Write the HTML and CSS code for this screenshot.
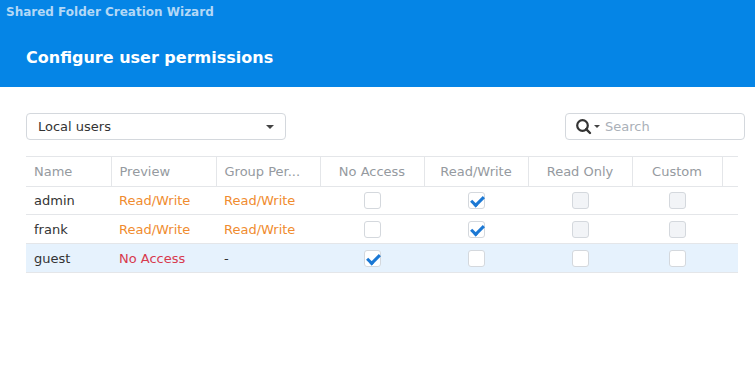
FILE: index.html
```html
<!DOCTYPE html>
<html lang="en">

<head>
    <meta charset="UTF-8" />
    <title>Shared Folder Creation Wizard</title>
    <link rel="stylesheet" href="styles.css">
</head>

<body>
    <div class="wizard">
        <header class="wizard-head">
            <div class="window-title">Shared Folder Creation Wizard</div>
            <h1>Configure user permissions</h1>
        </header>

        <div class="wizard-body">
            <div class="toolbar">
                <div class="select">
                    <span>Local users</span>
                    <span class="caret"></span>
                </div>
                <div class="search">
                    <svg class="search-icon" width="17" height="17" viewBox="0 0 17 17">
                        <circle cx="7.5" cy="7.5" r="5.3" fill="none" stroke="#333" stroke-width="2.2" />
                        <path d="M11.2 11.2 L15 15" stroke="#333" stroke-width="2.4" stroke-linecap="round" />
                    </svg>
                    <span class="caret small"></span>
                    <span class="placeholder">Search</span>
                </div>
            </div>

            <table class="perm-table">
                <colgroup>
                    <col style="width:85px">
                    <col style="width:105px">
                    <col style="width:104px">
                    <col style="width:104px">
                    <col style="width:104px">
                    <col style="width:104px">
                    <col style="width:90px">
                    <col style="width:16px">
                </colgroup>
                <thead>
                    <tr>
                        <th>Name</th>
                        <th>Preview</th>
                        <th>Group Per...</th>
                        <th class="center">No Access</th>
                        <th class="center">Read/Write</th>
                        <th class="center">Read Only</th>
                        <th class="center">Custom</th>
                        <th class="last"></th>
                    </tr>
                </thead>
                <tbody>
                    <tr>
                        <td>admin</td>
                        <td class="rw">Read/Write</td>
                        <td class="rw">Read/Write</td>
                        <td class="center"><span class="box"></span></td>
                        <td class="center"><span class="box checked"></span></td>
                        <td class="center"><span class="box disabled"></span></td>
                        <td class="center"><span class="box disabled"></span></td>
                        <td></td>
                    </tr>
                    <tr>
                        <td>frank</td>
                        <td class="rw">Read/Write</td>
                        <td class="rw">Read/Write</td>
                        <td class="center"><span class="box"></span></td>
                        <td class="center"><span class="box checked"></span></td>
                        <td class="center"><span class="box disabled"></span></td>
                        <td class="center"><span class="box disabled"></span></td>
                        <td></td>
                    </tr>
                    <tr class="selected">
                        <td>guest</td>
                        <td class="na">No Access</td>
                        <td>-</td>
                        <td class="center"><span class="box checked"></span></td>
                        <td class="center"><span class="box"></span></td>
                        <td class="center"><span class="box"></span></td>
                        <td class="center"><span class="box"></span></td>
                        <td></td>
                    </tr>
                </tbody>
            </table>
        </div>
    </div>
</body>

</html>
```

FILE: styles.css
```css
* {
    box-sizing: border-box;
}

body {
    margin: 0;
    font-family: 'DejaVu Sans', Verdana, sans-serif;
    background-color: #fff;
    color: #333;
}

.wizard-head {
    background-color: #0585e6;
    height: 87px;
    padding: 5px 0 0 6px;
}

.window-title {
    font-size: 12px;
    font-weight: bold;
    color: #b3d8f6;
}

.wizard-head h1 {
    margin: 29px 0 0 20px;
    font-size: 16px;
    font-weight: bold;
    color: #fff;
}

.wizard-body {
    padding: 26px 10px 0 26px;
}

.toolbar {
    display: flex;
    justify-content: space-between;
    margin-bottom: 16px;
}

.select {
    width: 260px;
    height: 27px;
    border: 1px solid #d4d8dd;
    border-radius: 4px;
    display: flex;
    align-items: center;
    justify-content: space-between;
    padding: 0 11px 0 11px;
    font-size: 13px;
    color: #333;
}

.caret {
    width: 0;
    height: 0;
    border-left: 4px solid transparent;
    border-right: 4px solid transparent;
    border-top: 4px solid #444;
}

.caret.small {
    border-left-width: 3px;
    border-right-width: 3px;
    border-top-width: 3px;
    margin: 0 5px 0 2px;
}

.search {
    width: 180px;
    height: 27px;
    border: 1px solid #d4d8dd;
    border-radius: 4px;
    display: flex;
    align-items: center;
    padding-left: 9px;
}

.placeholder {
    font-size: 13px;
    color: #aab0b8;
}

.perm-table {
    width: 712px;
    table-layout: fixed;
    border-collapse: collapse;
    font-size: 13px;
}

.perm-table th {
    height: 30px;
    font-weight: normal;
    color: #959aa0;
    text-align: left;
    padding: 0 8px;
    border-top: 1px solid #e4e6e9;
    border-bottom: 1px solid #e4e6e9;
    border-right: 1px solid #e4e6e9;
    white-space: nowrap;
    overflow: hidden;
}

.perm-table th.last {
    border-right: none;
}

.perm-table td {
    height: 29px;
    padding: 0 8px;
    border-bottom: 1px solid #e4e6e9;
    color: #333;
}

.perm-table tbody tr:first-child td {
    height: 28px;
}

.perm-table .center {
    text-align: center;
}

.perm-table td.rw {
    color: #f08c2f;
}

.perm-table td.na {
    color: #d83a4e;
}

.perm-table tr.selected td {
    background-color: #e6f2fd;
}

.box {
    display: inline-block;
    width: 17px;
    height: 17px;
    border: 1px solid #d4d8dd;
    border-radius: 3px;
    background-color: #fff;
    vertical-align: middle;
    position: relative;
}

.box.disabled {
    background-color: #f2f4f7;
}

.box.checked::after {
    content: "";
    position: absolute;
    left: 2px;
    top: 3px;
    width: 10px;
    height: 5px;
    border-left: 3px solid #1b78d4;
    border-bottom: 3px solid #1b78d4;
    transform: rotate(-45deg);
}
```
